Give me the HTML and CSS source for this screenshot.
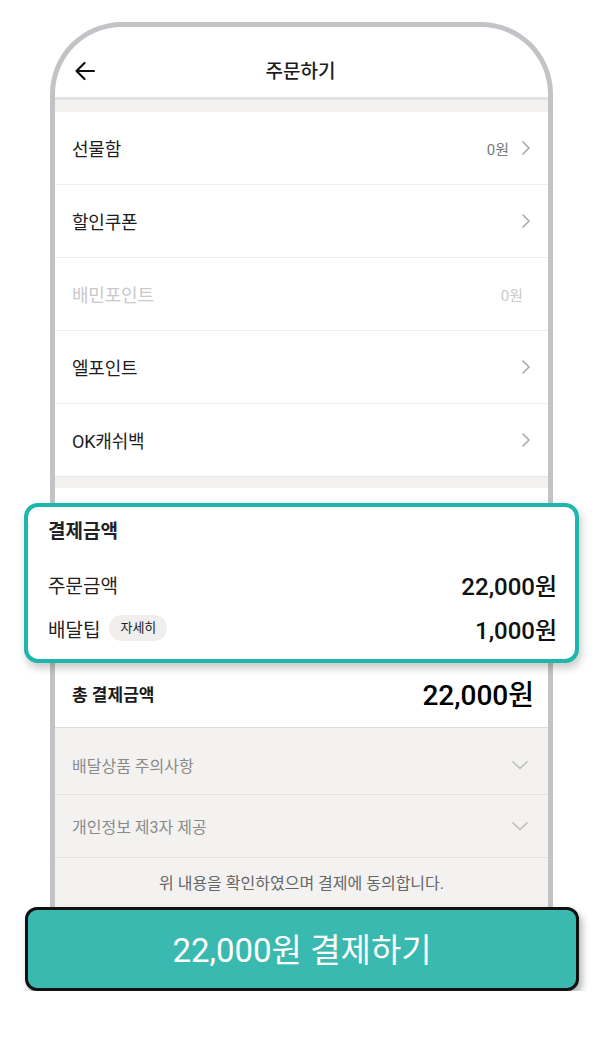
FILE: index.html
```html
<!DOCTYPE html>
<html lang="ko">
<head>
<meta charset="utf-8" />
<meta name="viewport" content="width=device-width, initial-scale=1" />
<title>주문하기</title>
<link rel="stylesheet" href="styles.css">
</head>
<body>
<div class="stage">
	<div class="phone">
		<header class="topbar">
			<span class="back">
				<svg width="22" height="20" viewBox="0 0 22 20"><path d="M20 10H2.5M10.5 2L2.5 10l8 8" fill="none" stroke="#111" stroke-width="2.2" stroke-linecap="round" stroke-linejoin="round"/></svg>
			</span>
			<h1>주문하기</h1>
		</header>
		<div class="band"></div>
		<ul class="menu">
			<li class="row">
				<span class="label">선물함</span>
				<span class="value">0원</span>
				<svg class="chev" width="10" height="16" viewBox="0 0 10 16"><path d="M1.5 1.5L8 8l-6.5 6.5" fill="none" stroke="#ababab" stroke-width="1.6"/></svg>
			</li>
			<li class="row">
				<span class="label">할인쿠폰</span>
				<svg class="chev" width="10" height="16" viewBox="0 0 10 16"><path d="M1.5 1.5L8 8l-6.5 6.5" fill="none" stroke="#ababab" stroke-width="1.6"/></svg>
			</li>
			<li class="row off">
				<span class="label">배민포인트</span>
				<span class="value">0원</span>
			</li>
			<li class="row">
				<span class="label">엘포인트</span>
				<svg class="chev" width="10" height="16" viewBox="0 0 10 16"><path d="M1.5 1.5L8 8l-6.5 6.5" fill="none" stroke="#ababab" stroke-width="1.6"/></svg>
			</li>
			<li class="row">
				<span class="label">OK캐쉬백</span>
				<svg class="chev" width="10" height="16" viewBox="0 0 10 16"><path d="M1.5 1.5L8 8l-6.5 6.5" fill="none" stroke="#ababab" stroke-width="1.6"/></svg>
			</li>
		</ul>
		<div class="band line"></div>

		<section class="summary">
			<h2>결제금액</h2>
			<div class="sum-row">
				<span>주문금액</span>
				<b>22,000원</b>
			</div>
			<div class="sum-row">
				<span>배달팁 <i class="pill">자세히</i></span>
				<b>1,000원</b>
			</div>
		</section>

		<div class="total">
			<span>총 결제금액</span>
			<b>22,000원</b>
		</div>

		<div class="notes">
			<div class="note">
				<span>배달상품 주의사항</span>
				<svg width="18" height="10" viewBox="0 0 18 10"><path d="M1.5 1.5L9 8.5l7.5-7" fill="none" stroke="#bdbdbd" stroke-width="1.6"/></svg>
			</div>
			<div class="note">
				<span>개인정보 제3자 제공</span>
				<svg width="18" height="10" viewBox="0 0 18 10"><path d="M1.5 1.5L9 8.5l7.5-7" fill="none" stroke="#bdbdbd" stroke-width="1.6"/></svg>
			</div>
			<p class="agree">위 내용을 확인하였으며 결제에 동의합니다.</p>
		</div>
	</div>
	<button class="pay">22,000원 결제하기</button>
</div>
</body>
</html>
```

FILE: styles.css
```css
* {
	box-sizing: border-box;
}
body {
	margin: 0;
	padding: 0;
	background: #fff;
	font-family: Roboto, "Noto Sans CJK KR", sans-serif;
	color: #1d1d1d;
}
.stage {
	width: 600px;
	padding-top: 22px;
}
.phone {
	margin-left: 50px;
	width: 503px;
	border: 5px solid #c3c3c7;
	border-bottom: none;
	border-radius: 72px 72px 0 0;
	background: #fff;
}

/* header */
.topbar {
	height: 73px;
	padding-top: 20px;
	border-bottom: 3px solid #e2e2e2;
	display: flex;
	align-items: center;
	position: relative;
}
.topbar h1 {
	flex: 1;
	margin: 0;
	height: 50px;
	line-height: 50px;
	text-align: center;
	font-size: 19px;
	font-weight: 500;
	padding-right: 2px;
}
.back {
	position: absolute;
	left: 19px;
	top: 34px;
	line-height: 0;
}
.band {
	height: 12px;
	background: #f3f2f0;
}
.band.line {
	border-top: 1px solid #e6e6e6;
	height: 12px;
}

/* menu rows */
.menu {
	list-style: none;
	margin: 0;
	padding: 0;
}
.row {
	height: 73px;
	display: flex;
	align-items: center;
	padding: 0 17px 0 17px;
	border-bottom: 1px solid #efefef;
}
.row:last-child {
	border-bottom: none;
	height: 72px;
}
.row .label {
	flex: 1;
	font-size: 18px;
	letter-spacing: -0.2px;
}
.row .value {
	font-size: 15px;
	color: #7a7a7a;
	margin-right: 12px;
}
.row.off .label,
.row.off .value {
	color: #c9c9c9;
}
.row.off .value {
	margin-right: 8px;
}
.chev {
	display: block;
}

/* highlighted summary */
.summary {
	margin: 15px -31px 0 -31px;
	height: 160px;
	border: 4px solid #1cb6ad;
	border-radius: 14px;
	background: #fff;
	padding: 12px 18px 0 20px;
	box-shadow: 2px 5px 8px rgba(0, 0, 0, 0.22);
}
.summary h2 {
	margin: 0 0 17px;
	font-size: 19px;
	line-height: 26px;
	font-weight: 700;
	color: #222;
}
.sum-row {
	height: 44px;
	display: flex;
	align-items: center;
	justify-content: space-between;
	font-size: 19px;
	color: #222;
}
.sum-row span {
	display: flex;
	align-items: center;
}
.sum-row b {
	font-size: 24px;
	font-weight: 500;
	color: #111;
}
.pill {
	font-style: normal;
	font-size: 13px;
	background: #f0efee;
	border-radius: 13px;
	height: 26px;
	line-height: 26px;
	padding: 0 11px;
	margin-left: 9px;
	color: #222;
}

/* total */
.total {
	height: 65px;
	display: flex;
	align-items: center;
	justify-content: space-between;
	padding: 0 14px 4px 17px;
	border-bottom: 1px solid #dcdcdc;
}
.total span {
	font-size: 17px;
	font-weight: 700;
	color: #1a1a1a;
}
.total b {
	font-size: 28px;
	font-weight: 500;
	color: #000;
}

/* notes */
.notes {
	background: #f3f2f0;
}
.note {
	height: 63px;
	display: flex;
	align-items: center;
	justify-content: space-between;
	padding: 0 19px 0 17px;
	border-bottom: 1px solid #e3e3e3;
	font-size: 16px;
	color: #8a8a8a;
}
.note:first-child {
	height: 67px;
	padding-top: 8px;
}
.note svg {
	display: block;
}
.agree {
	margin: 0;
	height: 92px;
	padding-top: 16px;
	line-height: 20px;
	text-align: center;
	font-size: 16px;
	color: #666;
}

/* pay button */
.pay {
	display: block;
	position: relative;
	margin: -43px 0 0 25px;
	width: 554px;
	height: 84px;
	border: 3px solid #111;
	border-radius: 12px;
	background: #3ab9b0;
	color: #fff;
	font-family: Roboto, "Noto Sans CJK KR", sans-serif;
	font-size: 33px;
	font-weight: 400;
	box-shadow: 3px 5px 7px rgba(0, 0, 0, 0.3);
	padding: 0 0 2px;
}
```
